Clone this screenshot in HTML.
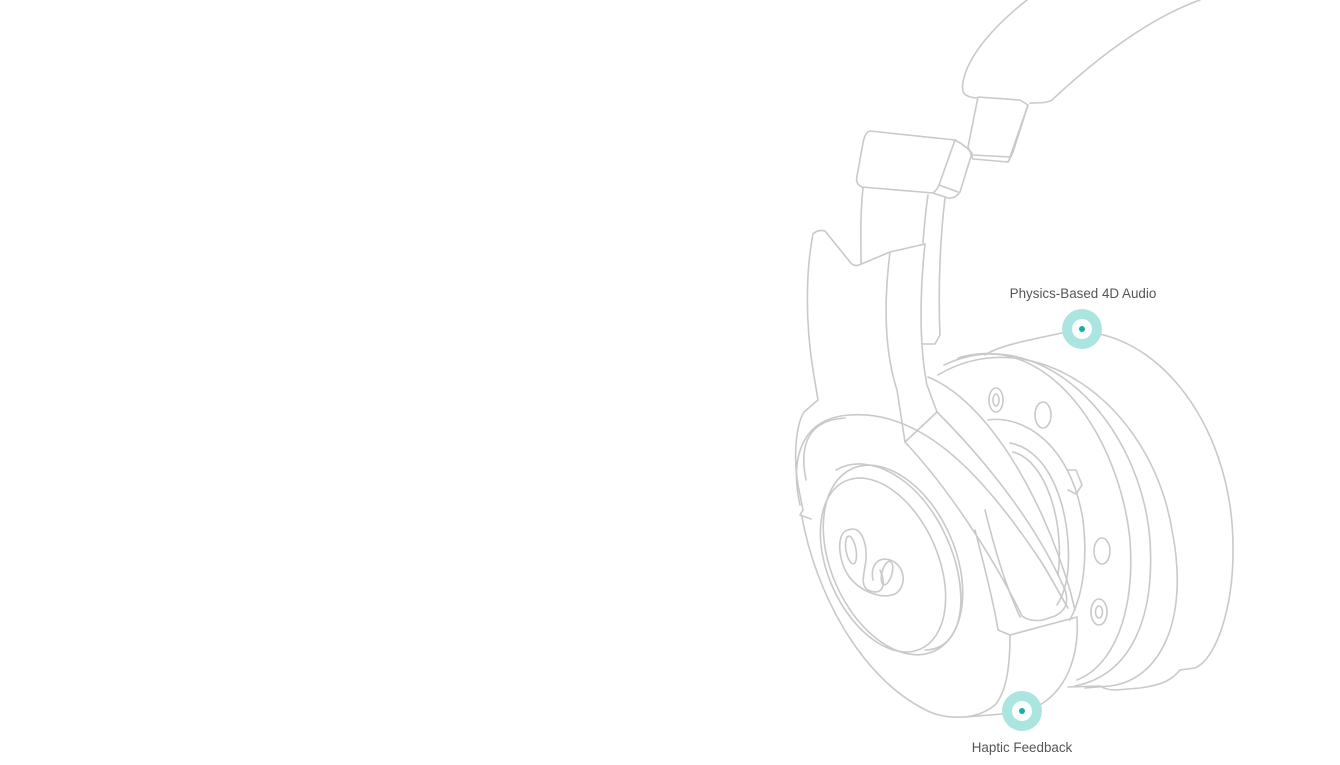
<!DOCTYPE html>
<html><head><meta charset="utf-8"><style>
html,body{margin:0;padding:0;background:#fff;width:1340px;height:765px;overflow:hidden}
svg{position:absolute;left:0;top:0}
text{font-family:"Liberation Sans",sans-serif;font-size:13.4px;fill:#555}
</style></head><body>
<svg width="1340" height="765" viewBox="0 0 1340 765">
<g fill="none" stroke="#c9c9c9" stroke-width="1.6" stroke-linejoin="round" stroke-linecap="round">
<path d="M1027,0 C995,25 968,55 963,82 C961,93 964,97 977,98"/>
<path d="M1200,0 C1150,18 1100,55 1052,100 C1047,103 1040,103 1030,103"/>
<path d="M978,97 L1020,100 L1028,105 L1013,152 L1008,162 L973,159 L968,147 L978,97"/>
<path d="M973,155 L1010,157 L1028,105 M1013,152 L1008,162"/>
<path d="M870,131 L955,140 Q966,146 972,153 L960,192 Q955,199 948,198 L933,193 L862,187 Q855,184 857,176 L863,143 Q865,132 870,131 Z"/>
<path d="M955,140 L939,185 L958,192 M933,193 Q937,190 939,185"/>
<path d="M863,188 C860,215 861,240 861,263"/>
<path d="M928,195 C925,215 924,230 923,243"/>
<path d="M945,198 C940,240 938,290 940,335 L935,344 L923,344"/>
<path d="M813,370 C805,320 806,270 813,234 Q818,229 825,231 L850,262 Q854,267 859,265 L890,252 L925,244"/>
<path d="M818,400 L804,412 C796,425 792,460 800,495 L803,510 L800,515 L811,519"/>
<path d="M813,370 L818,400"/>
<path d="M890,252 C884,300 884,350 897,390 L905,442"/>
<path d="M925,244 C919,300 920,350 927,385 L937,412"/>
<path d="M905,442 L937,412"/>
<path d="M928,377 C985,400 1040,490 1070,590 L1075,610"/>
<path d="M937,412 C980,455 1035,520 1065,590 C1070,605 1063,612 1055,616 L1043,620 Q1030,622 1022,616 C995,560 950,490 905,442"/>
<path d="M985,510 C1000,570 1010,595 1020,617"/>
<path d="M975,530 C988,580 995,610 998,630 L1010,635 L1077,617"/>
<path d="M1010,635 C1010,660 1008,690 995,705 C985,713 975,716 965,717"/>
<path d="M1077,618 C1079,650 1070,685 1043,703 C1035,708 1030,710 1030,710"/>
<path d="M802,517 C815,590 860,680 930,712 C945,718 955,717 965,717 L1002,714"/>
<path d="M800,505 C790,460 800,418 850,415 C920,410 980,470 1040,560 C1050,575 1060,595 1068,608"/>
<path d="M806,480 C798,440 812,420 845,418"/>
<ellipse cx="883" cy="565" rx="55" ry="92" transform="rotate(-24 883 565)"/>
<ellipse cx="893" cy="560" rx="62" ry="100" transform="rotate(-24 893 560)"/>
<path d="M836,470 C870,450 930,480 955,560 C970,615 955,650 925,650"/>
<path d="M848,530 C860,525 867,540 866,560 C864,575 860,585 868,590 C880,596 888,588 880,570"/>
<ellipse cx="851" cy="550" rx="5" ry="14" transform="rotate(-10 851 550)"/>
<path d="M848,530 C836,532 838,560 848,575 C858,590 880,600 895,594 C908,586 905,565 890,560 C878,556 870,566 873,580"/>
<ellipse cx="887" cy="573" rx="5" ry="12" transform="rotate(15 887 573)"/>
<path d="M1062,333 C1150,320 1232,420 1233,545 C1234,610 1215,660 1195,668 L1180,670 C1172,680 1162,685 1140,688 L1116,690 Q1106,690 1100,686 L1068,687"/>
<path d="M985,355 C1000,345 1030,340 1062,333"/>
<path d="M938,375 C1030,320 1150,400 1172,530 C1190,620 1160,680 1110,686 L1085,688"/>
<path d="M944,365 C1040,320 1140,420 1150,540 C1155,620 1130,675 1075,686"/>
<path d="M958,358 C1050,330 1120,440 1130,540 C1135,610 1115,665 1077,680"/>
<path d="M988,420 C1020,415 1070,440 1083,520 C1090,580 1075,610 1070,620"/>
<path d="M1010,443 C1050,450 1072,510 1068,570 C1066,590 1060,600 1057,605"/>
<path d="M1013,452 C1045,460 1065,520 1058,575"/>
<path d="M1067,470 L1076,470 L1082,485 L1076,494 L1068,490"/>
<ellipse cx="996" cy="400" rx="7" ry="12"/>
<ellipse cx="996" cy="400" rx="3" ry="6"/>
<ellipse cx="1043" cy="415" rx="8" ry="13"/>
<ellipse cx="1102" cy="551" rx="8" ry="13"/>
<ellipse cx="1099" cy="612" rx="8" ry="13"/>
<ellipse cx="1099" cy="612" rx="3.5" ry="6"/>
</g>
<circle cx="1082" cy="329" r="20" fill="#abe5e0"/>
<circle cx="1082" cy="329" r="10" fill="#fff"/>
<circle cx="1082" cy="329" r="3" fill="#14b0a5"/>
<circle cx="1022" cy="711" r="20" fill="#abe5e0"/>
<circle cx="1022" cy="711" r="10" fill="#fff"/>
<circle cx="1022" cy="711" r="3" fill="#14b0a5"/>
<text x="1083" y="298" text-anchor="middle">Physics-Based 4D Audio</text>
<text x="1022" y="752" text-anchor="middle">Haptic Feedback</text>
</svg>
</body></html>
